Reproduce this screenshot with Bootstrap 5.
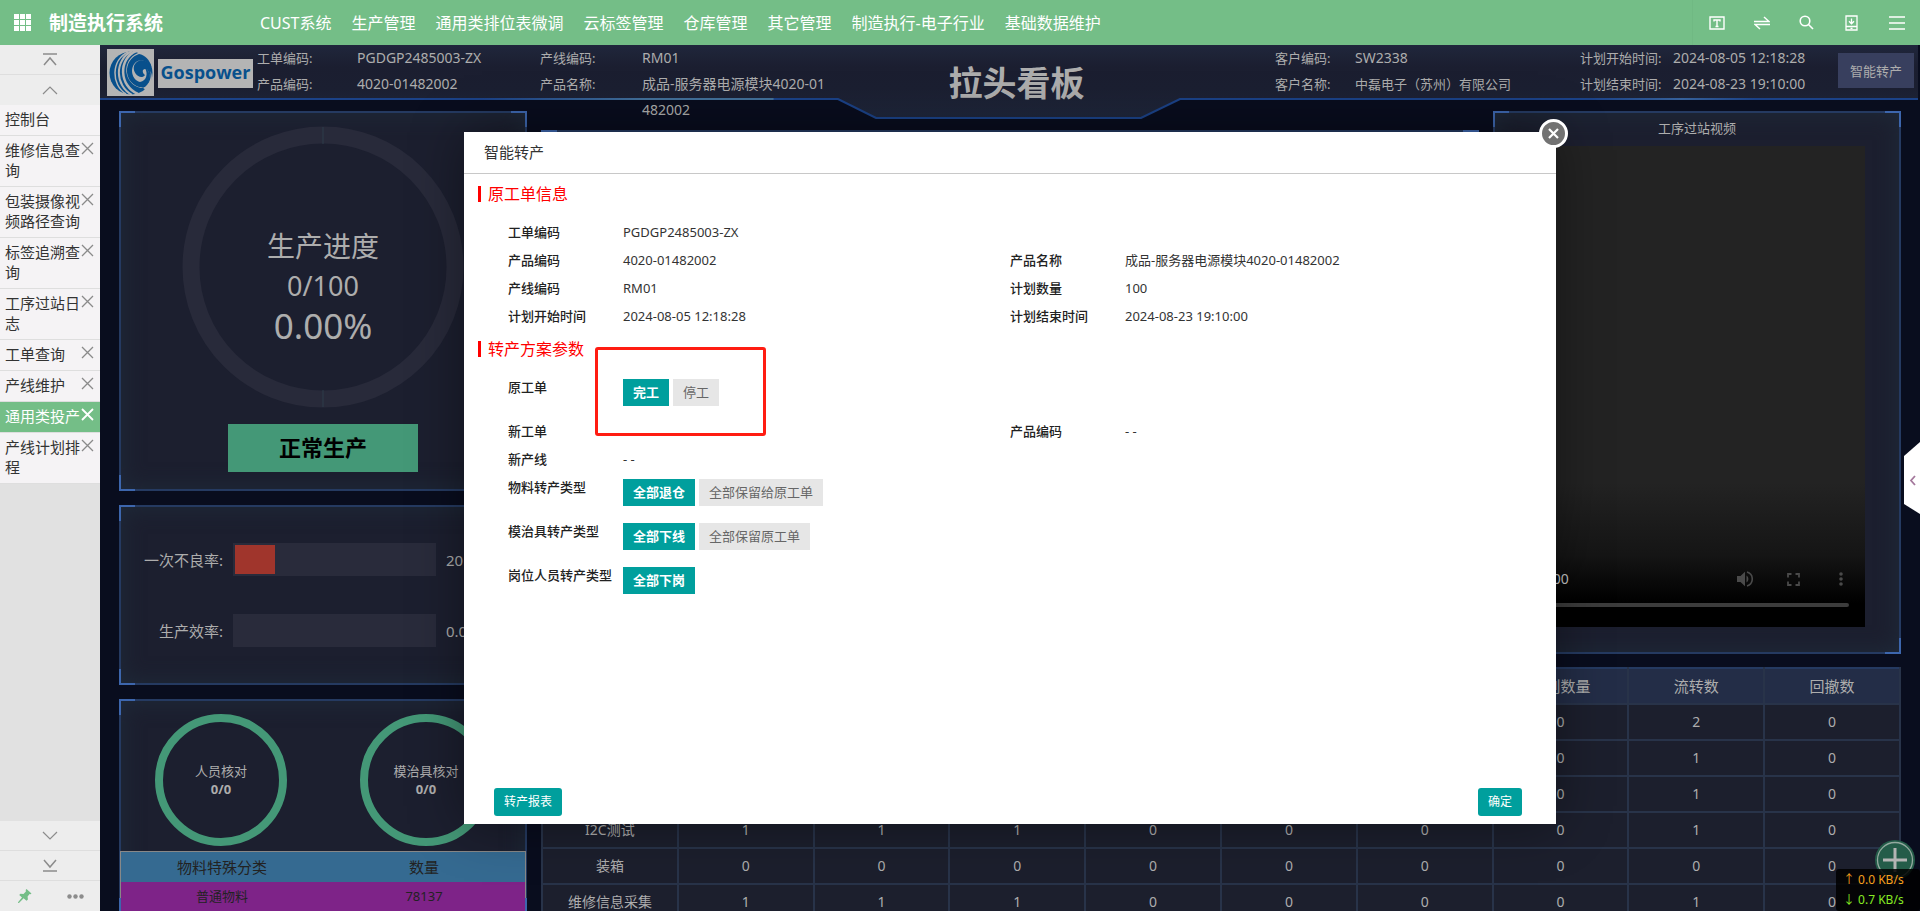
<!DOCTYPE html>
<html lang="zh-CN">
<head>
<meta charset="utf-8">
<meta name="viewport" content="width=device-width, initial-scale=1">
<title>制造执行系统</title>
<link href="https://cdn.jsdelivr.net/npm/bootstrap@5.3.0/dist/css/bootstrap.min.css" rel="stylesheet">
<style>
:root{--green:#74be87;--teal:#009f9d;--dim:#adadad;--edge:#253a61;--corner:#3d66ad}
body{font-family:"Noto Sans","Noto Sans CJK SC",sans-serif;font-size:14px;line-height:20px;color:#333}
a{color:inherit;text-decoration:none}
button{font:inherit}
svg{display:block}
/* top bar */
.topbar{background:var(--green);height:45px;color:#fff}
.brand{width:250px;padding-left:14px;gap:18px;font-size:19px;font-weight:700}
.topnav a{padding:0 10px;font-size:16px}
.tools{width:228px;padding-left:1px;border-left:1px solid #70b983}
.tools button{width:45px;height:45px;background:none;border:0;color:#fff}
/* side tabs */
.sidebar{width:100px;background:#e1e1e1}
.side-btn{height:30px;background:#ededed;border:0;border-bottom:1px solid #dedede;color:#8c8c8c}
.tab-item{background:#f5f3f5;border-bottom:1px solid #dedede;padding:4px 0 6px 5px;font-size:15px;color:#333}
.tab-item a{width:76px;word-break:break-all}
.tab-item button{background:none;border:0;color:#8a8a8a;width:14px;height:16px;padding:0}
.tab-item.active{background:var(--green);color:#fff}
.tab-item.active button{color:#fff}
/* dashboard */
.board{background:#090d1e;color:var(--dim)}
.board-head{height:55px;padding-left:7px;padding-right:6px;line-height:26px}
.head-side{flex:1 1 0;z-index:1}
.head-bg{left:0;top:0;width:calc(100% - 2px);height:75px}
.logo-mark{width:47px;height:47px;background:#b4b4b4}
.logo-text{width:95px;height:29px;margin:14px 4px 0 4px;background:#b4b4b4;color:#08508c;font:700 18px/26px "Open Sans",sans-serif}
.head-left,.head-right{display:grid;align-content:start}
.head-left{grid-template-columns:100px 183px 102px 190px}
.head-right{grid-template-columns:80px 225px 93px 165px}
.key{font-size:13px}
.head-title{font-size:34px;font-weight:700;line-height:76px;padding-left:12px}
.head-btn{width:76px;height:35px;background:#383f5e;border:0;color:var(--dim)}
.board-grid{display:grid;grid-template-columns:408px minmax(0,1fr);gap:14px;padding:11px 19px 0}
.stack{display:grid;gap:14px;align-content:start}
.top-row{display:grid;grid-template-columns:minmax(0,1fr) 408px;gap:14px}
.panel{position:relative;background:#1c1f2f;border:2px solid var(--edge);box-shadow:inset 0 0 22px #1f2b3a}
.panel::before{content:"";position:absolute;inset:-2px;pointer-events:none;
 --c:var(--corner);
 background:
 linear-gradient(var(--c),var(--c)) 0 0/16px 2px,linear-gradient(var(--c),var(--c)) 0 0/2px 16px,
 linear-gradient(var(--c),var(--c)) 100% 0/16px 2px,linear-gradient(var(--c),var(--c)) 100% 0/2px 16px,
 linear-gradient(var(--c),var(--c)) 0 100%/16px 2px,linear-gradient(var(--c),var(--c)) 0 100%/2px 16px,
 linear-gradient(var(--c),var(--c)) 100% 100%/16px 2px,linear-gradient(var(--c),var(--c)) 100% 100%/2px 16px;
 background-repeat:no-repeat}
.panel-progress{height:380px;padding-top:13px}
.gauge{width:282px}
.ring-text{inset:0;padding-top:100px;font-size:28px;line-height:40px}
.ring-text em{font-size:27px;font-style:normal}
.ring-text strong{font-size:35px;font-weight:400}
.state{width:190px;height:48px;margin:16px auto 0;background:#449877;color:#000;font-size:22px;line-height:46px;font-weight:700}
.panel-meters{height:180px;padding-top:36px;font-size:15px}
.meter-row{height:33px;margin-bottom:38px}
.meter-label{width:104px;padding-right:2px}
.meter{width:203px;height:33px;margin:0 10px 0 8px;background:#292b3b;padding:2px}
.meter-fill{height:100%;background:#a0352c}
.panel-checks{padding-top:13px}
.checks{gap:73px;padding-left:34px;margin-bottom:5px}
.check-ring{width:132px;height:132px;border:8px solid #449877;border-radius:50%;font-size:13px;line-height:18px}
.mat-wrap{margin:0 -1px}
.mat-table{width:100%;border:1px solid #888;color:#222;table-layout:fixed;text-align:center}
.mat-table th{height:30px;background:#356a91;font-size:15px;font-weight:400}
.mat-table td{height:30px;background:#7e2388;font-size:13px}
.panel-middle{margin-top:19px}
.panel-video{height:543px}
.video-title{line-height:31px;margin-bottom:2px}
.video-box{height:481px;background:linear-gradient(#232323 70%,#151515 85%,#000 95%);margin:0 34px}
.video-ctl{height:48px;padding-left:12px;color:#c8c8c8}
.video-ctl button{width:48px;height:48px;border:0;background:none;color:#4a4a4a}
.video-track{height:4px;border-radius:2px;background:#3c3c3c;margin:0 16px 20px}
.flow-wrap{margin-top:-1px}
.flow-table{table-layout:fixed;width:100%;border-collapse:collapse;background:#1c1f2d}
.flow-table th,.flow-table td{height:36px;border:2px solid #283349;text-align:center;font-weight:400;white-space:nowrap;padding:0}
.flow-table thead th{background:#232d47;border-top-color:var(--edge);font-size:15px}
/* dialog */
.dialog-wrap{inset:0;z-index:3}
.dialog{width:60%;height:80%;background:#fff;box-shadow:0 0 50px rgba(0,0,0,.4);font-size:13px;color:#333}
.dialog-head{height:42px;border-bottom:1px solid #c8c8c8;padding-left:20px;margin-bottom:1px;font-size:15px;font-weight:400}
.dialog-close{top:-13px;right:-12px;width:29px;height:29px;border-radius:50%;border:3px solid #fff;background:#727272;padding:0}
.sect{margin:0 0 5px 14px;font-size:16px;line-height:38px;color:#f00;font-weight:400}
.sect::before{content:"";width:3px;height:16px;background:#f00;margin-right:7px}
.info{display:grid;grid-template-columns:115px minmax(0,387fr) 115px minmax(0,431fr);margin:0 0 0 44px;line-height:28px}
.info dt{font-weight:500;color:#222}
.info dd{margin:0}
.info dd.wide{grid-column:2/-1}
.info .opts{height:44px;padding-top:6px;gap:4px}
.opt{height:27px;border:0;background:#e6e6e6;color:#666;padding:0 10px;line-height:26px}
.opt.on{background:var(--teal);color:#fff;font-weight:700}
.frame-mark{left:-28px;top:-26px;width:171px;height:89px;border:3px solid #ff1c12;border-radius:3px;pointer-events:none}
.dialog-foot{padding:0 34px 8px 30px}
.foot-btn{height:28px;border:0;border-radius:3px;background:var(--teal);color:#fff;font-size:12px;padding:0 10px}
/* floating items */
.edge-tab{right:0;top:50%;z-index:4;border:0;background:none;padding:0}
.plus-btn{right:5px;bottom:31px;border:0;background:none;padding:0}
.speed{right:0;bottom:0;width:84px;height:42px;background:rgba(0,0,0,.85);border-radius:3px;font-size:12px;padding:1px 0 0 7px}
.speed-up{color:#f5a01d}
.speed-down{color:#86ea22}
</style>
</head>
<body>
<div class="d-flex flex-column vh-100 overflow-hidden">
<header class="topbar d-flex align-items-center flex-shrink-0">
 <a href="#" class="brand d-flex align-items-center">
  <svg width="17" height="17" viewBox="0 0 17 17" fill="#fff"><path d="M0 0h5v5H0zM6 0h5v5H6zM12 0h5v5h-5zM0 6h5v5H0zM6 6h5v5H6zM12 6h5v5h-5zM0 12h5v5H0zM6 12h5v5H6zM12 12h5v5h-5z"/></svg>
  <span>制造执行系统</span></a>
 <nav class="topnav d-flex flex-grow-1"><a href="#">CUST系统</a><a href="#">生产管理</a><a href="#">通用类排位表微调</a><a href="#">云标签管理</a><a href="#">仓库管理</a><a href="#">其它管理</a><a href="#">制造执行-电子行业</a><a href="#">基础数据维护</a></nav>
 <div class="tools d-flex">
  <button aria-label="主题" class="d-flex align-items-center justify-content-center"><svg width="16" height="14" viewBox="0 0 16 14" fill="none" stroke="#fff" stroke-width="1.4"><path d="M1 1h14v12H1zM5 5.500V4h6v1.500M8 4v6.500M6.500 10.500h3"/></svg></button>
  <button aria-label="切换" class="d-flex align-items-center justify-content-center"><svg width="16" height="14" viewBox="0 0 16 14" fill="none" stroke="#fff" stroke-width="1.500"><path d="M0 5.500h15L10 1M16 8.500H1L6 13"/></svg></button>
  <button aria-label="搜索" class="d-flex align-items-center justify-content-center"><svg width="15" height="15" viewBox="0 0 15 15" fill="none" stroke="#fff" stroke-width="1.600"><circle cx="6" cy="6" r="4.800"/><path d="M9.500 9.500 14 14"/></svg></button>
  <button aria-label="下载" class="d-flex align-items-center justify-content-center"><svg width="13" height="16" viewBox="0 0 13 16" fill="none" stroke="#fff" stroke-width="1.300"><path d="M1 1h11v14H1zM1 11.500h11M6.500 3.500v5M4 6.300l2.500 2.500L9 6.300M5.500 13.300h2"/></svg></button>
  <button aria-label="菜单" class="d-flex align-items-center justify-content-center"><svg width="16" height="14" viewBox="0 0 16 14" stroke="#fff" stroke-width="1.500"><path d="M0 1h16M0 7h16M0 13h16"/></svg></button>
 </div>
</header>
<div class="d-flex flex-grow-1 overflow-hidden">
<aside class="sidebar d-flex flex-column flex-shrink-0">
 <button class="side-btn d-flex align-items-center justify-content-center" aria-label="顶部"><svg width="14" height="13" viewBox="0 0 14 13" fill="none" stroke="currentColor" stroke-width="1.500"><path d="M0 1h14M1 12l6-7 6 7"/></svg></button>
 <button class="side-btn d-flex align-items-center justify-content-center border-0" aria-label="向上"><svg width="16" height="9" viewBox="0 0 16 9" fill="none" stroke="currentColor" stroke-width="1.200"><path d="M1 8l7-7 7 7"/></svg></button>
 <div class="tab-item"><a href="#">控制台</a></div>
 <div class="tab-item d-flex"><a href="#">维修信息查询</a><button aria-label="关闭"><svg width="13" height="13" viewBox="0 0 13 13" stroke="currentColor" stroke-width="1.300"><path d="M1 1l11 11M12 1L1 12"/></svg></button></div>
 <div class="tab-item d-flex"><a href="#">包装摄像视频路径查询</a><button aria-label="关闭"><svg width="13" height="13" viewBox="0 0 13 13" stroke="currentColor" stroke-width="1.300"><path d="M1 1l11 11M12 1L1 12"/></svg></button></div>
 <div class="tab-item d-flex"><a href="#">标签追溯查询</a><button aria-label="关闭"><svg width="13" height="13" viewBox="0 0 13 13" stroke="currentColor" stroke-width="1.300"><path d="M1 1l11 11M12 1L1 12"/></svg></button></div>
 <div class="tab-item d-flex"><a href="#">工序过站日志</a><button aria-label="关闭"><svg width="13" height="13" viewBox="0 0 13 13" stroke="currentColor" stroke-width="1.300"><path d="M1 1l11 11M12 1L1 12"/></svg></button></div>
 <div class="tab-item d-flex"><a href="#">工单查询</a><button aria-label="关闭"><svg width="13" height="13" viewBox="0 0 13 13" stroke="currentColor" stroke-width="1.300"><path d="M1 1l11 11M12 1L1 12"/></svg></button></div>
 <div class="tab-item d-flex"><a href="#">产线维护</a><button aria-label="关闭"><svg width="13" height="13" viewBox="0 0 13 13" stroke="currentColor" stroke-width="1.300"><path d="M1 1l11 11M12 1L1 12"/></svg></button></div>
 <div class="tab-item active d-flex"><a href="#">通用类投产</a><button aria-label="关闭"><svg width="13" height="13" viewBox="0 0 13 13" stroke="currentColor" stroke-width="1.800"><path d="M1 1l11 11M12 1L1 12"/></svg></button></div>
 <div class="tab-item d-flex"><a href="#">产线计划排程</a><button aria-label="关闭"><svg width="13" height="13" viewBox="0 0 13 13" stroke="currentColor" stroke-width="1.300"><path d="M1 1l11 11M12 1L1 12"/></svg></button></div>
 <button class="side-btn d-flex align-items-center justify-content-center mt-auto" aria-label="向下"><svg width="16" height="9" viewBox="0 0 16 9" fill="none" stroke="currentColor" stroke-width="1.200"><path d="M1 1l7 7 7-7"/></svg></button>
 <button class="side-btn d-flex align-items-center justify-content-center" aria-label="底部"><svg width="14" height="13" viewBox="0 0 14 13" fill="none" stroke="currentColor" stroke-width="1.500"><path d="M0 12h14M1 1l6 7 6-7"/></svg></button>
 <div class="d-flex">
  <button class="side-btn border-0 w-50 d-flex align-items-center justify-content-center" aria-label="固定"><svg width="14" height="14" viewBox="0 0 14 14" fill="#74be87"><path d="M8.500 0l5 4.500-1 .8-.9-.2-2 2.500.3 3-1.400 1.200-2.900-2.600L1 14H0l.2-1 3.800-4.400L1.200 6l1.300-1.300 3 .2L7.900 2.500 7.700 1z"/></svg></button>
  <button class="side-btn border-0 w-50 d-flex align-items-center justify-content-center" aria-label="更多"><svg width="17" height="5" viewBox="0 0 17 5" fill="#8c8c8c"><circle cx="2.500" cy="2.500" r="2.200"/><circle cx="8.500" cy="2.500" r="2.200"/><circle cx="14.500" cy="2.500" r="2.200"/></svg></button>
 </div>
</aside>
<main class="board flex-grow-1 position-relative overflow-hidden">
 <div class="board-head position-relative d-flex">
  <svg class="head-bg position-absolute" viewBox="0 0 1818 75" preserveAspectRatio="none">
   <defs><linearGradient id="hg" x1="0" y1="0" x2="0" y2="1"><stop offset="0" stop-color="#20273c"/><stop offset=".3" stop-color="#1b1e30"/><stop offset=".6" stop-color="#1b1f31"/><stop offset="1" stop-color="#1f273c"/></linearGradient>
   <linearGradient id="lg" x1="0" y1="0" x2="1" y2="0"><stop offset="0" stop-color="#1b4288"/><stop offset=".21" stop-color="#1b4288"/><stop offset=".3" stop-color="#42709a"/><stop offset=".37" stop-color="#42709a"/><stop offset=".371" stop-color="#1b4288"/><stop offset=".82" stop-color="#1b4288"/><stop offset=".87" stop-color="#36619b"/><stop offset=".91" stop-color="#1b4288"/></linearGradient></defs>
   <path d="M0 0H1818V54H1080L1041 73H776L738 54H0z" fill="url(#hg)"/><path d="M0 54H738L776 73H1041L1080 54H1818" fill="none" stroke="url(#lg)" stroke-width="2"/></svg>
  <div class="head-side d-flex">
   <div class="logo-mark mt-1"><svg width="47" height="47" viewBox="0 0 47 47"><circle cx="24" cy="24" r="21.500" fill="#08508c"/><g fill="none" stroke="#b4b4b4"><path d="M21 3C4 11 4 36 19 45" stroke-width="1.500"/><path d="M25 2C7 11 8 37 25 46" stroke-width="2"/><path d="M29 2C11 10 12 37 31 45" stroke-width="2.500"/></g><path d="M31 4C14 11 16 35 34 39C41 38 45 30 43.500 22C47 30 44 44 35 45C38 42 39 40 36 39C44 34 44 20 38 20C35 20 35 24 38 26C34 32 25 24 27 17C29 11 36 9 42 14L47 12V0H31z" fill="#b4b4b4"/><path d="M32 5C38 6 43 11 44.500 18C41 12 34 10 29 13C22 19 25 31 33 33C40 32 41 24 38 19C44 21 44 33 38 38C28 40 19 31 20 20C21 12 26 7 32 5z" fill="#08508c"/></svg></div>
   <div class="logo-text text-center">Gospower</div>
   <div class="head-left">
    <span class="key">工单编码:</span><span>PGDGP2485003-ZX</span><span class="key">产线编码:</span><span>RM01</span>
    <span class="key">产品编码:</span><span>4020-01482002</span><span class="key">产品名称:</span><span>成品-服务器电源模块4020-01<br>482002</span>
   </div>
  </div>
  <h1 class="head-title position-relative mb-0">拉头看板</h1>
  <div class="head-side d-flex justify-content-end">
   <div class="head-right">
    <span class="key">客户编码:</span><span>SW2338</span><span class="key">计划开始时间:</span><span>2024-08-05 12:18:28</span>
    <span class="key">客户名称:</span><span class="key">中磊电子（苏州）有限公司</span><span class="key">计划结束时间:</span><span>2024-08-23 19:10:00</span>
   </div>
   <button class="head-btn key mt-2">智能转产</button>
  </div>
 </div>
 <div class="board-grid">
  <div class="stack">
   <section class="panel panel-progress">
    <div class="gauge position-relative mx-auto">
     <svg width="282" height="282" viewBox="0 0 282 282" fill="none"><circle cx="141" cy="141" r="132" stroke="#282a3a" stroke-width="17"/><path d="M141 1v17M141 264v17" stroke="#2c3d4b"/></svg>
     <div class="ring-text position-absolute d-flex flex-column text-center"><span>生产进度</span><em>0/100</em><strong>0.00%</strong></div>
    </div>
    <div class="state text-center">正常生产</div>
   </section>
   <section class="panel panel-meters">
    <div class="meter-row d-flex align-items-center"><span class="meter-label text-end">一次不良率:</span><div class="meter"><div class="meter-fill" style="width:20%"></div></div><span>20.00%</span></div>
    <div class="meter-row d-flex align-items-center"><span class="meter-label text-end">生产效率:</span><div class="meter"></div><span>0.00%</span></div>
   </section>
   <section class="panel panel-checks">
    <div class="checks d-flex">
     <div class="check-ring d-flex flex-column align-items-center justify-content-center"><span>人员核对</span><b>0/0</b></div>
     <div class="check-ring d-flex flex-column align-items-center justify-content-center"><span>模治具核对</span><b>0/0</b></div>
    </div>
    <div class="mat-wrap"><table class="mat-table"><thead><tr><th>物料特殊分类</th><th>数量</th></tr></thead><tbody><tr><td>普通物料</td><td>78137</td></tr></tbody></table></div>
   </section>
  </div>
  <div class="stack">
   <div class="top-row">
    <section class="panel panel-middle"></section>
    <section class="panel panel-video">
     <div class="video-title key text-center">工序过站视频</div>
     <div class="video-box d-flex flex-column justify-content-end">
      <div class="video-ctl d-flex align-items-center"><span class="me-auto">0:00</span>
       <button class="d-flex align-items-center justify-content-center" aria-label="音量"><svg width="16" height="16" viewBox="0 0 16 16" fill="currentColor"><path d="M0 5h3.500L8 .8v14.400L3.500 11H0z"/><path d="M9.500 4.500c2.500 1.500 2.500 5.500 0 7z"/><path d="M10 1c7 2 7 12 0 14" fill="none" stroke="currentColor" stroke-width="1.600"/></svg></button>
       <button class="d-flex align-items-center justify-content-center" aria-label="全屏"><svg width="13" height="13" viewBox="0 0 13 13" fill="none" stroke="currentColor" stroke-width="1.800"><path d="M1 4.500V1h3.500M8.500 1H12v3.500M12 8.500V12H8.500M4.500 12H1V8.500"/></svg></button>
       <button class="d-flex align-items-center justify-content-center" aria-label="更多选项"><svg width="4" height="14" viewBox="0 0 4 14" fill="currentColor"><circle cx="2" cy="2" r="1.800"/><circle cx="2" cy="7" r="1.800"/><circle cx="2" cy="12" r="1.800"/></svg></button></div>
      <div class="video-track"></div>
     </div>
    </section>
   </div>
   <div class="flow-wrap">
   <table class="flow-table">
    <thead><tr><th></th><th></th><th></th><th></th><th></th><th></th><th></th><th>计划数量</th><th>流转数</th><th>回撤数</th></tr></thead>
    <tbody>
     <tr><td></td><td></td><td></td><td></td><td></td><td></td><td></td><td>0</td><td>2</td><td>0</td></tr>
     <tr><td></td><td></td><td></td><td></td><td></td><td></td><td></td><td>0</td><td>1</td><td>0</td></tr>
     <tr><td></td><td></td><td></td><td></td><td></td><td></td><td></td><td>0</td><td>1</td><td>0</td></tr>
     <tr><td>I2C测试</td><td>1</td><td>1</td><td>1</td><td>0</td><td>0</td><td>0</td><td>0</td><td>1</td><td>0</td></tr>
     <tr><td>装箱</td><td>0</td><td>0</td><td>0</td><td>0</td><td>0</td><td>0</td><td>0</td><td>0</td><td>0</td></tr>
     <tr><td>维修信息采集</td><td>1</td><td>1</td><td>1</td><td>0</td><td>0</td><td>0</td><td>0</td><td>1</td><td>0</td></tr>
    </tbody>
   </table></div>
  </div>
 </div>
 <button class="plus-btn position-absolute" aria-label="新增"><svg width="40" height="40" viewBox="0 0 40 40" fill="none"><circle cx="20" cy="20" r="20" fill="#245c49"/><circle cx="20" cy="20" r="17.500" stroke="#93a99f" stroke-width="1.300"/><path d="M20 8v24M8 20h24" stroke="#b4b4b4" stroke-width="3"/></svg></button>
 <div class="speed position-absolute"><div class="speed-up">↑ 0.0 KB/s</div><div class="speed-down">↓ 0.7 KB/s</div></div>
 <div class="dialog-wrap position-absolute d-flex align-items-center justify-content-center">
  <div class="dialog position-relative d-flex flex-column" role="dialog" aria-labelledby="dlgTitle">
   <h2 class="dialog-head d-flex align-items-center" id="dlgTitle">智能转产</h2>
   <button class="dialog-close position-absolute d-flex align-items-center justify-content-center" aria-label="关闭"><svg width="11" height="11" viewBox="0 0 11 11" stroke="#fff" stroke-width="2.200"><path d="M1 1l9 9M10 1L1 10"/></svg></button>
   <h3 class="sect d-flex align-items-center">原工单信息</h3>
   <dl class="info">
    <dt>工单编码</dt><dd class="wide">PGDGP2485003-ZX</dd>
    <dt>产品编码</dt><dd>4020-01482002</dd><dt>产品名称</dt><dd>成品-服务器电源模块4020-01482002</dd>
    <dt>产线编码</dt><dd>RM01</dd><dt>计划数量</dt><dd>100</dd>
    <dt>计划开始时间</dt><dd>2024-08-05 12:18:28</dd><dt>计划结束时间</dt><dd>2024-08-23 19:10:00</dd>
   </dl>
   <h3 class="sect d-flex align-items-center">转产方案参数</h3>
   <dl class="info">
    <dt>原工单</dt><dd class="wide opts d-flex position-relative"><button class="opt on">完工</button><button class="opt">停工</button><span class="frame-mark position-absolute"></span></dd>
    <dt>新工单</dt><dd></dd><dt>产品编码</dt><dd>- -</dd>
    <dt>新产线</dt><dd class="wide">- -</dd>
    <dt>物料转产类型</dt><dd class="wide opts d-flex"><button class="opt on">全部退仓</button><button class="opt">全部保留给原工单</button></dd>
    <dt>模治具转产类型</dt><dd class="wide opts d-flex"><button class="opt on">全部下线</button><button class="opt">全部保留原工单</button></dd>
    <dt>岗位人员转产类型</dt><dd class="wide opts d-flex"><button class="opt on">全部下岗</button></dd>
   </dl>
   <div class="dialog-foot d-flex justify-content-between mt-auto"><button class="foot-btn">转产报表</button><button class="foot-btn">确定</button></div>
  </div>
 </div>
 <button class="edge-tab position-absolute translate-middle-y" aria-label="展开"><svg width="16" height="72" viewBox="0 0 16 72"><path d="M16 0L0 14V62L16 72z" fill="#fff"/><path d="M11 34l-4 4.500 4 4.500" fill="none" stroke="#a4789c" stroke-width="1.800"/></svg></button>
</main>
</div>
</div>
<script src="https://cdn.jsdelivr.net/npm/bootstrap@5.3.0/dist/js/bootstrap.bundle.min.js"></script>
</body>
</html>
